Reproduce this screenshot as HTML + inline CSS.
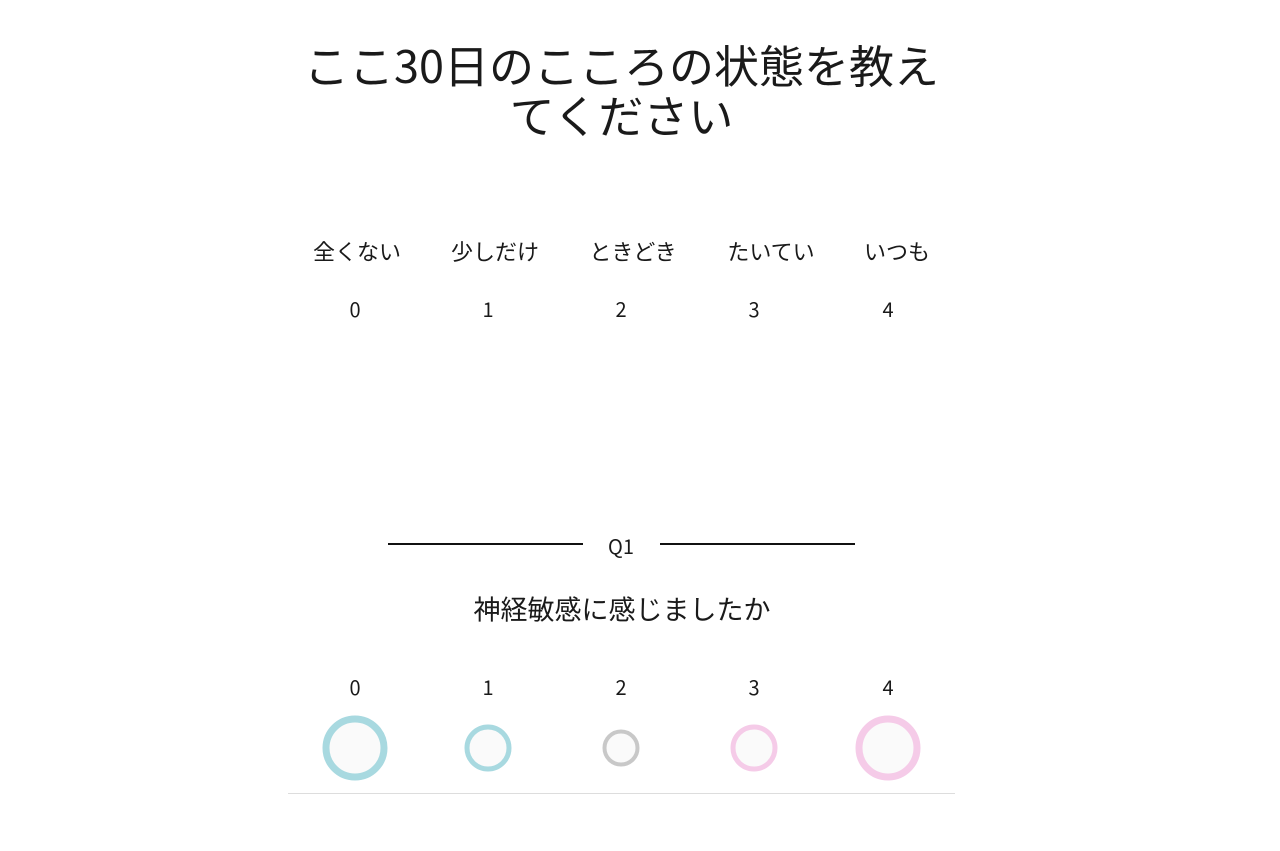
<!DOCTYPE html>
<html><head><meta charset="utf-8"><style>
body{margin:0;background:#fff;font-family:"Noto Sans CJK JP","Liberation Sans",sans-serif;color:#1a1a1a;}
.wrap{position:relative;width:1280px;height:851px;}
h1{position:absolute;left:270px;width:703px;margin:0;top:39px;font-size:45px;font-weight:400;line-height:50px;text-align:center;}
.c{position:absolute;transform:translate(-50%,-50%);white-space:nowrap;line-height:1;}
.lab{font-size:22px;}
.num{font-size:20px;}
.ring{position:absolute;border-radius:50%;background:#fafafa;box-sizing:border-box;transform:translate(-50%,-50%);}
</style></head><body><div class="wrap">
<h1>ここ30日のこころの状態を教え<br>てください</h1>
<div class="c lab" style="left:357px;top:251px">全くない</div>
<div class="c lab" style="left:495px;top:251px">少しだけ</div>
<div class="c lab" style="left:633px;top:251px">ときどき</div>
<div class="c lab" style="left:771px;top:251px">たいてい</div>
<div class="c lab" style="left:897px;top:251px">いつも</div>
<div class="c num" style="left:355px;top:309px">0</div>
<div class="c num" style="left:488px;top:309px">1</div>
<div class="c num" style="left:621px;top:309px">2</div>
<div class="c num" style="left:754px;top:309px">3</div>
<div class="c num" style="left:888px;top:309px">4</div>
<div style="position:absolute;left:388px;top:543px;width:195px;height:2px;background:#111"></div>
<div style="position:absolute;left:660px;top:543px;width:195px;height:2px;background:#111"></div>
<div class="c" style="left:621px;top:546px;font-size:20px">Q1</div>
<div class="c" style="left:622px;top:608px;font-size:27px">神経敏感に感じましたか</div>
<div class="c num" style="left:355px;top:687px">0</div>
<div class="c num" style="left:488px;top:687px">1</div>
<div class="c num" style="left:621px;top:687px">2</div>
<div class="c num" style="left:754px;top:687px">3</div>
<div class="c num" style="left:888px;top:687px">4</div>
<div class="ring" style="left:355px;top:748px;width:65px;height:65px;border:7px solid #a8d9e0"></div>
<div class="ring" style="left:488px;top:748px;width:47px;height:47px;border:5px solid #a8d9e0"></div>
<div class="ring" style="left:621px;top:748px;width:37px;height:37px;border:4px solid #c8c8c8"></div>
<div class="ring" style="left:754px;top:748px;width:47px;height:47px;border:5px solid #f5cbe8"></div>
<div class="ring" style="left:888px;top:748px;width:65px;height:65px;border:7px solid #f5cbe8"></div>
<div style="position:absolute;left:288px;top:793px;width:667px;height:1px;background:#ddd"></div>
</div></body></html>
